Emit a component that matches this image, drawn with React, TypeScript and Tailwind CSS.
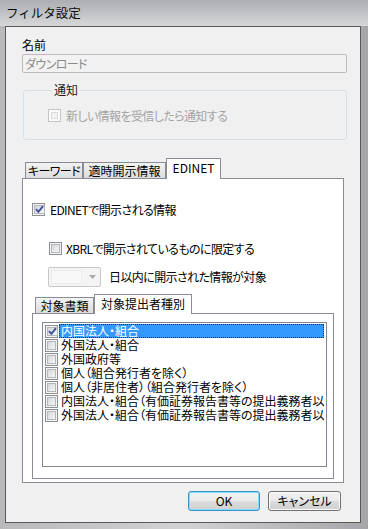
import React from "react";

function Check({ checked = false, disabled = false }: { checked?: boolean; disabled?: boolean }) {
  return (
    <span
      className={
        disabled
          ? "w-[13px] h-[13px] shrink-0 border border-[#c4c4c4] bg-[#fbfbfb] p-[2px] flex"
          : "w-[13px] h-[13px] shrink-0 border border-[#8e8f8f] bg-[#f4f4f4] p-[1px] flex"
      }
    >
      <span
        className={
          disabled
            ? "flex-1 border border-[#dcdcdc] bg-[#f2f2f2]"
            : "flex-1 border border-[#b4b8bd] bg-gradient-to-br from-[#d4d7db] to-[#f7f7f7] flex items-center justify-center"
        }
      >
        {checked && (
          <svg width="9" height="9" viewBox="0 0 9 9" className="block">
            <path d="M1 4.2 L3.4 6.8 L8 1.2" fill="none" stroke="#3b4f9a" strokeWidth="1.9" />
          </svg>
        )}
      </span>
    </span>
  );
}

const items = [
  "内国法人・組合",
  "外国法人・組合",
  "外国政府等",
  "個人（組合発行者を除く）",
  "個人（非居住者）（組合発行者を除く）",
  "内国法人・組合（有価証券報告書等の提出義務者以外）",
  "外国法人・組合（有価証券報告書等の提出義務者以外）",
];

export default function App() {
  return (
    <div className="w-[368px] h-[529px] flex flex-col bg-[#c2c2c5] font-['Noto_Sans_CJK_JP','Noto_Sans',sans-serif] [font-feature-settings:'palt'] tracking-[-0.6px] text-[12px] leading-[14px] text-black overflow-hidden">
      <div className="h-[26px] shrink-0 flex items-center pl-[6px] bg-gradient-to-b from-[#acaeb2] to-[#d6d7d9] text-[#0a0a0a] text-[12.5px] tracking-normal [font-feature-settings:normal]">
        フィルタ設定
      </div>
      <div className="flex-1 flex pl-[5px] pr-[7px] pb-[6px] bg-gradient-to-r from-[#b9b9bc] via-[#d2d2d4] to-[#a6a6aa]">
        <div className="w-[356px] h-[497px] border border-[#585858] bg-[#f0f0f0] flex flex-col">
          {/* 名前 */}
          <div className="ml-[16px] mt-[11px] h-[14px] tracking-normal">名前</div>
          <div className="ml-[16px] mt-[2px] w-[325px] h-[19px] shrink-0 border border-[#b9bcc0] rounded-[2px] bg-[#f2f2f2] flex items-center pl-[2px] text-[#8a8a8a]">
            ダウンロード
          </div>

          {/* 通知 group */}
          <fieldset className="ml-[17px] mt-[10px] w-[324px] h-[57px] shrink-0 border border-[#d5dfe5] rounded-[3px] pt-[12px] pl-[24px]">
            <legend className="ml-[4px] px-[2px] leading-[14px] text-[#1a1a1a] tracking-normal">通知</legend>
            <div className="flex items-center gap-[5px] h-[13px] text-[#a3a3a3]">
              <Check disabled />
              <span>新しい情報を受信したら通知する</span>
            </div>
          </fieldset>

          {/* Outer tab control */}
          <div className="ml-[16px] mt-[18px] w-[322px] flex flex-col shrink-0">
            <div className="flex items-end pl-[3px] h-[20px]">
              <div className="w-[58px] h-[16px] border border-b-0 border-[#898c95] bg-gradient-to-b from-[#f3f3f3] to-[#dcdcdc] flex items-center justify-center">
                キーワード
              </div>
              <div className="w-[83px] h-[16px] border border-b-0 border-[#898c95] bg-gradient-to-b from-[#f3f3f3] to-[#dcdcdc] flex items-center justify-center tracking-normal">
                適時開示情報
              </div>
              <div className="w-[55px] h-[21px] -mb-[1px] relative z-10 border border-b-0 border-[#898c95] bg-white flex items-center justify-center pb-[2px] tracking-normal">
                EDINET
              </div>
            </div>
            <div className="h-[305px] border border-[#898c95] bg-white flex flex-col">
              <div className="ml-[9px] mt-[24px] flex items-center gap-[5px] h-[13px]">
                <Check checked />
                <span>EDINETで開示される情報</span>
              </div>
              <div className="ml-[26px] mt-[26px] flex items-center gap-[4px] h-[13px]">
                <Check />
                <span>XBRLで開示されているものに限定する</span>
              </div>
              <div className="ml-[25px] mt-[12px] flex items-center gap-[8px] h-[20px]">
                <div className="w-[53px] h-[20px] border border-[#c8c8c8] rounded-[2px] bg-[#f4f4f4] flex items-center pl-[2px] pr-[4px]">
                  <div className="w-[31px] h-[14px] border border-dotted border-[#e2e2e2] bg-[#f8f8f8]" />
                  <div className="flex-1 flex justify-end">
                    <svg width="7" height="4" viewBox="0 0 7 4">
                      <path d="M0 0 H7 L3.5 4 Z" fill="#a8a8a8" />
                    </svg>
                  </div>
                </div>
                <span>日以内に開示された情報が対象</span>
              </div>

              {/* Inner tab control */}
              <div className="ml-[9px] mt-[7px] w-[302px] flex flex-col">
                <div className="flex items-end pl-[3px] h-[19px]">
                  <div className="w-[59px] h-[16px] border border-b-0 border-[#898c95] bg-gradient-to-b from-[#f3f3f3] to-[#dcdcdc] flex items-center justify-center tracking-normal">
                    対象書類
                  </div>
                  <div className="w-[98px] h-[20px] -mb-[1px] relative z-10 border border-b-0 border-[#898c95] bg-white flex items-center justify-center pb-[2px] tracking-normal">
                    対象提出者種別
                  </div>
                </div>
                <div className="h-[166px] border border-[#898c95] bg-white pl-[9px] pt-[8px]">
                  <div className="w-[285px] h-[145px] border border-[#828790] bg-white pt-[1px] overflow-hidden tracking-normal">
                    {items.map((t, i) => (
                      <div key={i} className="h-[14px] flex items-center pl-[2px] pr-[2px] gap-[1px] leading-[12px]">
                        <Check checked={i === 0} />
                        <div
                          className={
                            i === 0
                              ? "flex-1 h-[14px] flex items-center pl-[1px] bg-[#3399ff] text-white border border-dotted border-[#10306a] whitespace-nowrap overflow-hidden"
                              : "flex-1 h-[14px] flex items-center pl-[2px] whitespace-nowrap overflow-hidden"
                          }
                        >
                          {t}
                        </div>
                      </div>
                    ))}
                  </div>
                </div>
              </div>
            </div>
          </div>

          {/* Buttons */}
          <div className="mt-[8px] flex justify-end pr-[19px] gap-[8px] tracking-normal">
            <div className="w-[72px] h-[20px] rounded-[3px] border border-[#3c8fc8] shadow-[inset_0_0_0_1px_#7fe0fb] bg-[linear-gradient(to_bottom,#f2f2f2_0%,#ebebeb_50%,#dddddd_50%,#cfcfcf_100%)] flex items-center justify-center">
              OK
            </div>
            <div className="w-[73px] h-[20px] rounded-[3px] border border-[#707070] shadow-[inset_0_0_0_1px_#fbfbfb] bg-[linear-gradient(to_bottom,#f2f2f2_0%,#ebebeb_50%,#dddddd_50%,#cfcfcf_100%)] flex items-center justify-center">
              キャンセル
            </div>
          </div>
        </div>
      </div>
    </div>
  );
}
